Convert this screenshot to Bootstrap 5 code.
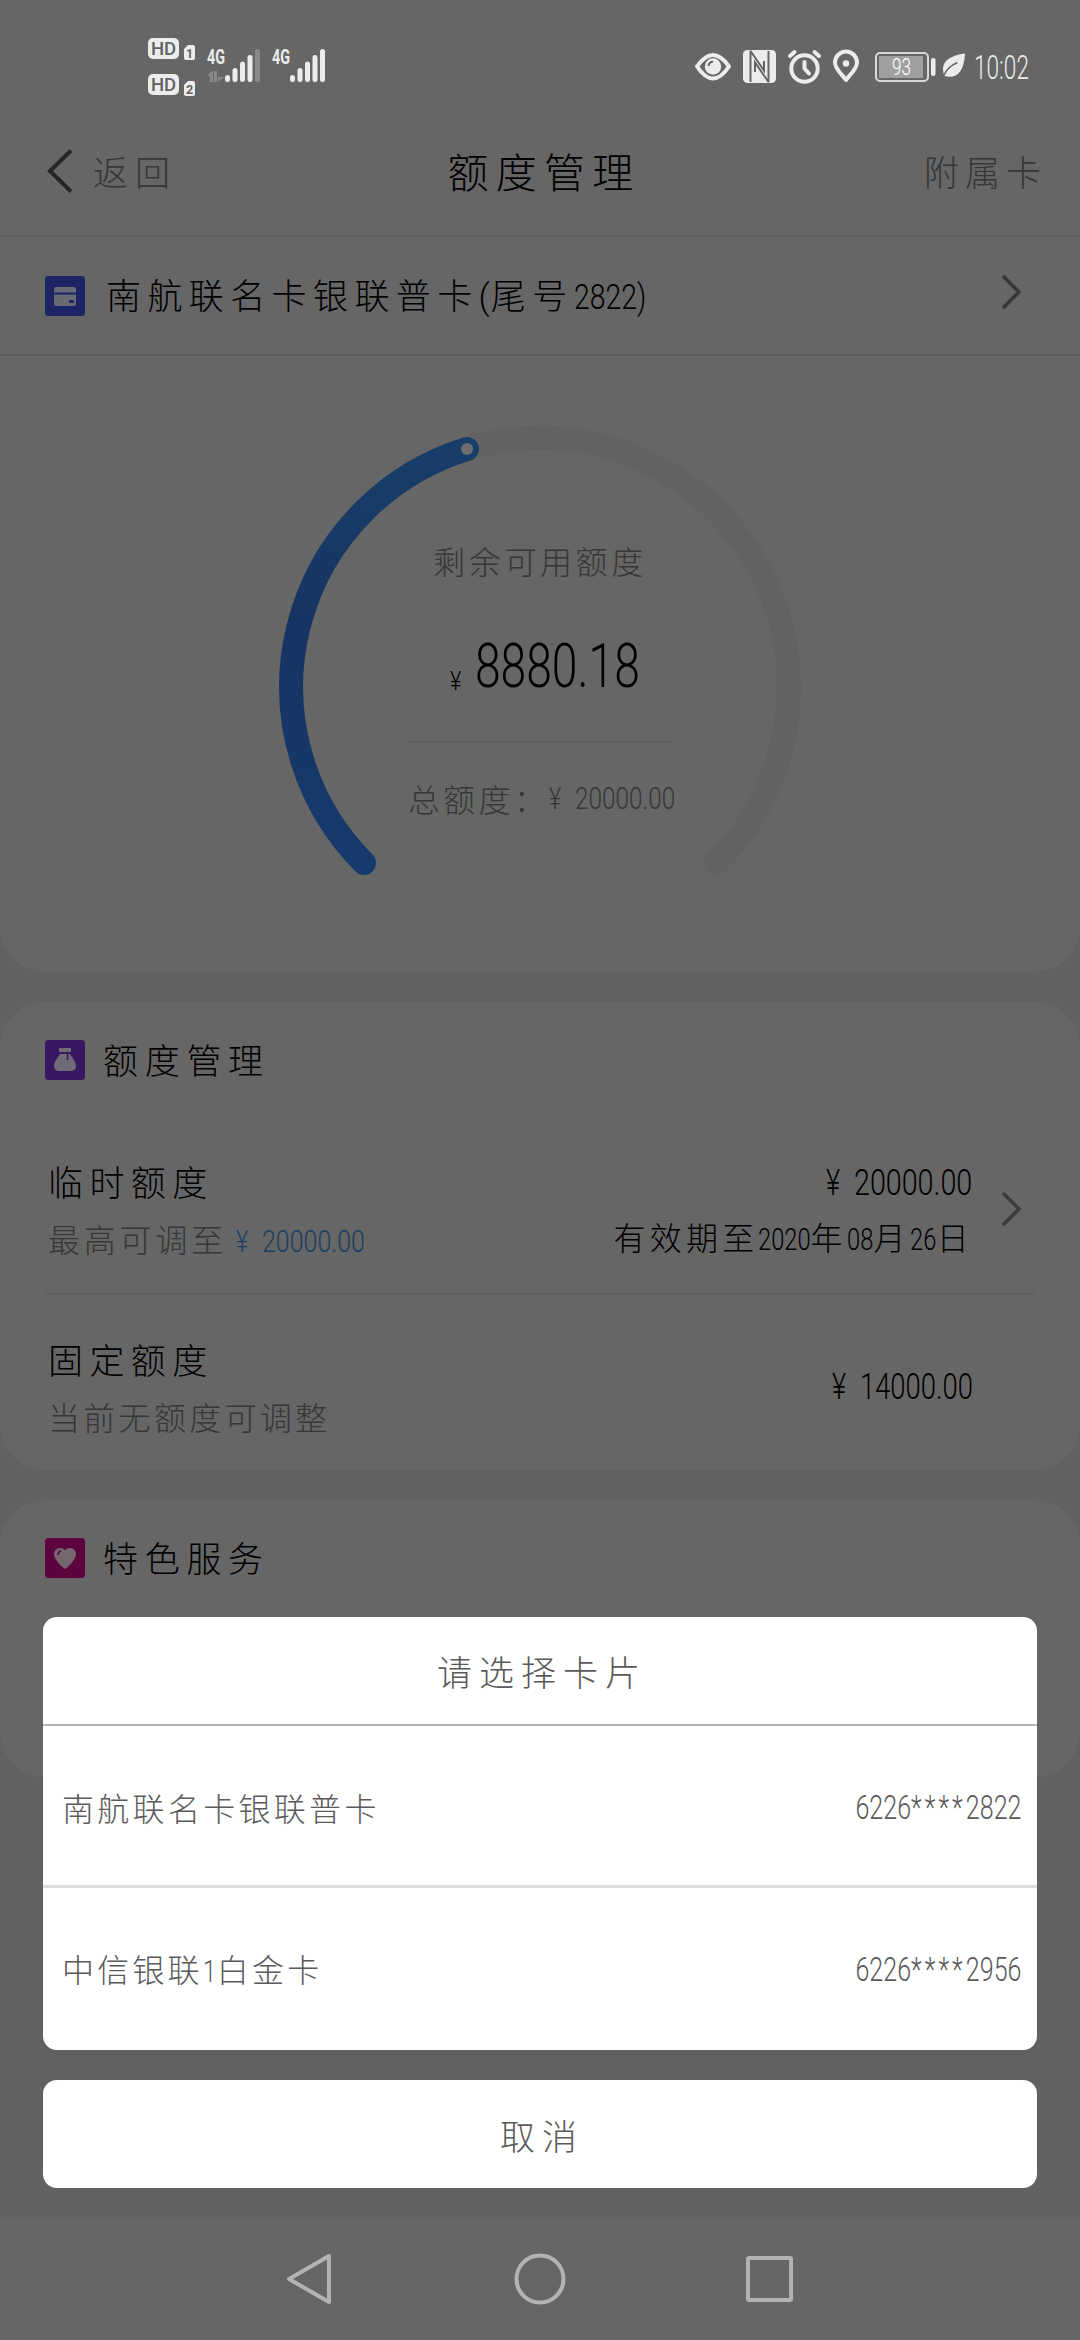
<!DOCTYPE html>
<html lang="zh-CN">
<head>
<meta charset="utf-8">
<meta name="viewport" content="width=device-width, initial-scale=1">
<title>额度管理</title>
<link href="https://cdn.jsdelivr.net/npm/bootstrap@5.3.0/dist/css/bootstrap.min.css" rel="stylesheet">
<style>
body{background:#616161;color:#000;font-family:"Noto Sans CJK SC",sans-serif;font-weight:300;width:1080px;height:2340px;overflow:hidden;line-height:1}
svg{display:block;flex:none}
.panel{background:#666;flex:none}
.status{height:130px}
.topbar{height:105px;padding:0 39px 0 47px;display:grid;grid-template-columns:1fr auto 1fr}
.cardrow{height:121px;border-top:2px solid #5f5f5f;border-bottom:2px solid #5b5b5b;padding:0 59px 0 45px}
.t42{font-size:41px;letter-spacing:7.2px}
.t36{font-size:35px;letter-spacing:7px}
.t34{font-size:35px;letter-spacing:6.4px}
.t32{font-size:32px;letter-spacing:4px}
.dim{color:#373737}
.nm{display:inline-block;white-space:nowrap;font-family:Roboto,"Noto Sans CJK SC",sans-serif;letter-spacing:0;transform:scaleX(.74);transform-origin:0 50%}
.nm.end{transform:scaleX(.76);transform-origin:100% 50%;font-size:33px}
.nm .stars{letter-spacing:4px}
.nm.money{font-size:37px}
.gaugebox{height:616px;border-radius:0 0 45px 45px}
.dial{inset:0}
.avail{padding-top:188px;height:226px;letter-spacing:3.6px}
.amount{height:100px;margin-top:34px;padding-left:9px}
.amount .yen{font-size:26px;width:25px;transform:scaleX(.85)}
.amount .big{font-size:62px;width:165px;transform:scaleX(.745)}
.rule{width:266px;height:2px;background:#5f5f5f;margin-top:25px}
.total{height:110px;padding-left:5px}
.total .t32,.total{letter-spacing:3.2px}
.sect{margin-top:30px;border-radius:45px;padding:0 45px}
.sect h2{font-size:35px;letter-spacing:6.7px;font-weight:300;line-height:1}
.secthead{padding-top:38px;gap:18px}
.blue{color:#1b3e63}
.limits{height:468px}
.service{height:277px}
.sheet{left:43px;right:43px;top:1617px}
.pane{background:#fff;border-radius:14px;color:#5a5a5a}
.pane-head{height:109px;border-bottom:2px solid #b4b4b4}
.opt{padding:0 16px 0 19px}
.softnav{left:0;right:0;bottom:0;height:123px;background:#666}
</style>
<script src="https://cdn.jsdelivr.net/npm/bootstrap@5.3.0/dist/js/bootstrap.bundle.min.js"></script>
</head>
<body class="position-relative d-flex flex-column">

<div class="panel status">
<svg width="1080" height="130" viewBox="0 0 1080 130" fill="#ececec" font-family="Roboto,sans-serif">
  <!-- HD voice badges -->
  <g><rect x="148" y="38" width="31" height="21" rx="5"/><path d="M184 49l4-4h5q2 0 2 2v11q0 2-2 2h-7q-2 0-2-2z"/>
  <rect x="148" y="74" width="31" height="21" rx="5"/><path d="M184 85l4-4h5q2 0 2 2v11q0 2-2 2h-7q-2 0-2-2z"/></g>
  <g fill="#626262" font-weight="500" text-anchor="middle"><text x="163.500" y="55" font-size="18.500" textLength="25">HD</text><text x="163.500" y="91" font-size="18.500" textLength="25">HD</text><text x="189.500" y="57.500" font-size="12.500" font-weight="700">1</text><text x="189.500" y="93.500" font-size="12.500" font-weight="700">2</text></g>
  <g font-size="20" font-weight="700"><text x="207" y="64" textLength="18" lengthAdjust="spacingAndGlyphs">4G</text><text x="272" y="64" textLength="18" lengthAdjust="spacingAndGlyphs">4G</text></g>
  <path fill="#888" d="M207 76l6-6v12h-3v-6zM214 71h3v11h-3zM218 70v7h6l-6 5z"/>
  <g stroke="#ececec" stroke-width="5" stroke-linecap="round"><path d="M227.500 77.500v2M235 70.500v9M242.500 64v15.500M250 57.500v22M292.500 77.500v2M300 70.500v9M307.500 64v15.500M315 57.500v22M322.500 51.500v28"/><path stroke="#8a8a8a" d="M257.500 51.500v28"/></g>
  <!-- eye comfort -->
  <path fill="none" stroke="#ececec" stroke-width="4" stroke-linejoin="round" d="M697 66.500Q705 55 713 55T729 66.500Q721 78.500 713 78.500T697 66.500z"/><circle cx="713" cy="66.500" r="8.200"/><path d="M708.500 66q.5-4 4.500-4.500" fill="none" stroke="#666" stroke-width="2"/>
  <!-- nfc -->
  <rect x="743" y="50" width="33" height="33" rx="4.500"/><g fill="none" stroke="#666" stroke-width="2"><path d="M750.500 50.500V82M750.500 51l13.500 19.500V61"/><path d="M768.500 82.500V51M768.500 82l-13.500-19.500V72"/></g>
  <!-- alarm -->
  <g fill="none" stroke="#ececec" stroke-width="4" stroke-linecap="round"><circle cx="804.500" cy="68.500" r="13.200"/><path d="M804.500 62v6.500l4.500 5M790 56l4.500-4M819 56l-4.500-4"/></g>
  <!-- location -->
  <path fill="none" stroke="#ececec" stroke-width="4" stroke-linejoin="round" d="M846 80C842 74.500 835 69 835 62.500a11 11 0 0 1 22 0C857 69 850 74.500 846 80z"/><circle cx="846" cy="63.500" r="3.200"/>
  <!-- battery -->
  <rect x="876" y="53" width="52" height="28" rx="4" fill="none" stroke="#d8d8d8" stroke-width="2"/><rect x="879" y="56" width="44" height="22" fill="#a0a0a0"/><rect x="931" y="58" width="4.500" height="18" rx="2"/>
  <text x="892" y="75" font-size="23" font-weight="300" fill="#fff" textLength="19" lengthAdjust="spacingAndGlyphs">93</text>
  <!-- power saving leaf -->
  <path d="M965 53.500C951 55 943 61 943 68.500c0 4 1 6.500 1.500 7.500C956 79 964 73 965 53.500z"/><path d="M944 75.500Q947 67 957.500 62.500" stroke="#666" stroke-width="1.500" fill="none"/>
  <text x="974" y="79" font-size="33" font-weight="300" textLength="55" lengthAdjust="spacingAndGlyphs">10:02</text>
</svg>
</div>

<header class="panel topbar align-items-center pb-4">
  <div class="d-flex align-items-center dim t36"><svg width="26" height="44" viewBox="0 0 26 44" fill="none" stroke="#262626" stroke-width="4"><path d="M24 1.500L3 22l21 20.500"/></svg><span style="padding-left:20px">返回</span></div>
  <div class="t42">额度管理</div>
  <div class="dim t36 text-end" style="letter-spacing:6px;margin-right:-6px">附属卡</div>
</header>

<div class="panel cardrow d-flex align-items-center">
  <svg width="40" height="40" viewBox="0 0 40 40"><rect width="40" height="40" rx="3.500" fill="#1c2465"/><path fill="#676a73" d="M11 11h18q2 0 2 2v3.500H9V13q0-2 2-2zM9 18.500h22V28q0 2-2 2H11q-2 0-2-2z"/><rect x="24" y="24" width="5" height="3" rx="1" fill="#1c2465"/></svg>
  <div class="t34" style="padding-left:21px">南航联名卡银联普卡<span style="letter-spacing:1px;font-family:Roboto">(</span>尾号<span class="nm" style="width:76px;transform:scaleX(.81)">2822)</span></div>
  <svg class="ms-auto mb-2" width="20" height="36" viewBox="0 0 20 36" fill="none" stroke="#373737" stroke-width="3.500"><path d="M2 2l16 16L2 34"/></svg>
</div>

<section class="panel gaugebox position-relative">
  <svg class="dial position-absolute" width="1080" height="616" viewBox="0 356 1080 616" fill="none" stroke-width="24" stroke-linecap="round">
    <defs><linearGradient id="arc" x1="0" y1="1" x2="0" y2="0"><stop offset="0" stop-color="#163a6d"/><stop offset=".55" stop-color="#163463"/><stop offset="1" stop-color="#183d69"/></linearGradient></defs>
    <path stroke="#626262" d="M364 863A249 249 0 1 1 716 863"/>
    <path stroke="url(#arc)" d="M364 863A249 249 0 0 1 467 449"/><circle cx="467" cy="449" r="6" fill="#6d6d6d"/>
  </svg>
  <div class="position-relative d-flex flex-column align-items-center">
    <div class="avail dim t32">剩余可用额度</div>
    <div class="amount d-flex align-items-center"><span class="nm yen" style="padding-top:30px">¥</span><span class="nm big">8880.18</span></div>
    <div class="rule"></div>
    <div class="total d-flex align-items-center dim" style="font-size:32px"><span>总额度：</span><span class="nm" style="width:26px">¥</span><span class="nm" style="width:102px;transform:scaleX(.76)">20000.00</span></div>
  </div>
</section>

<section class="panel sect limits">
  <div class="secthead d-flex align-items-center">
    <svg width="40" height="40" viewBox="0 0 40 40"><rect width="40" height="40" rx="3.500" fill="#371860"/><path fill="#706a77" d="M14 8h12v4H14zM15 14h10c2 4 6 7 6 12 0 4-3 5-5 5H14c-2 0-5-1-5-5 0-5 4-8 6-12z"/><path d="M22.500 14v6" stroke="#371860" stroke-width="1.500"/></svg>
    <h2 class="m-0 pb-1">额度管理</h2>
  </div>
  <div class="d-flex align-items-center" style="height:213px;padding:45px 14px 0 3px">
    <div class="d-flex flex-column" style="gap:24px;padding-top:1px"><div class="t34">临时额度</div><div class="dim t32" style="letter-spacing:3.800px">最高可调至<span class="nm blue" style="margin-left:9px;width:26px">¥</span><span class="nm blue" style="width:104px;transform:scaleX(.78)">20000.00</span></div></div>
    <div class="ms-auto d-flex flex-column align-items-end" style="gap:19px"><div class="d-flex"><span class="nm money" style="width:28px">¥</span><span class="nm money" style="width:118px;transform:scaleX(.775)">20000.00</span></div><div class="t32" style="letter-spacing:4.200px;margin-right:-1px">有效期至<span class="nm" style="width:52px">2020</span>年<span class="nm" style="width:27px">08</span>月<span class="nm" style="width:27px">26</span>日</div></div>
    <svg style="margin-left:29px" width="20" height="36" viewBox="0 0 20 36" fill="none" stroke="#3c3c3c" stroke-width="3.500"><path d="M2 2l16 16L2 34"/></svg>
  </div>
  <div style="height:2px;background:#5f5f5f"></div>
  <div class="d-flex align-items-center" style="height:175px;padding:7px 63px 0 3px">
    <div class="d-flex flex-column" style="gap:24px"><div class="t34">固定额度</div><div class="dim t32" style="letter-spacing:3.300px">当前无额度可调整</div></div>
    <div class="ms-auto d-flex"><span class="nm money" style="width:28px">¥</span><span class="nm money" style="width:112px">14000.00</span></div>
  </div>
</section>

<section class="panel sect service">
  <div class="secthead d-flex align-items-center">
    <svg width="40" height="40" viewBox="0 0 40 40"><rect width="40" height="40" rx="3.500" fill="#5d043f"/><path fill="#76676f" d="M20 31C16 28 9 21.500 9 16c0-6 8-8 11-3.500C23 8 31 10 31 16c0 5.500-7 12-11 15z"/><path d="M13 17q0-3.500 3-4" stroke="#5d043f" stroke-width="1.500" fill="none"/></svg>
    <h2 class="m-0 pb-1">特色服务</h2>
  </div>
</section>

<!-- card picker -->
<div class="sheet position-absolute">
  <div class="pane">
    <div class="pane-head d-flex align-items-center justify-content-center t36" style="padding-left:4px">请选择卡片</div>
    <div class="opt d-flex align-items-center justify-content-between" style="height:159px;padding-top:3px"><span class="t32" style="letter-spacing:3.300px">南航联名卡银联普卡</span><span class="nm end">6226<span class="stars">****</span>2822</span></div>
    <div style="height:3px;background:#dcdcdc"></div>
    <div class="opt d-flex align-items-center justify-content-between" style="height:162px"><span class="t32" style="letter-spacing:3.200px">中信银联<span class="nm" style="width:14px">1</span>白金卡</span><span class="nm end">6226<span class="stars">****</span>2956</span></div>
  </div>
  <div class="pane d-flex align-items-center justify-content-center t36" style="margin-top:30px;height:108px;padding-left:4px">取消</div>
</div>

<nav class="softnav position-absolute">
  <svg width="1080" height="123" viewBox="0 2217 1080 123" fill="none" stroke="#b3b3b3" stroke-width="4" stroke-linejoin="round"><path d="M329 2256v46L289 2279z"/><circle cx="540" cy="2279" r="23.500"/><rect x="748" y="2258" width="43" height="42" rx="1"/></svg>
</nav>
</body>
</html>
